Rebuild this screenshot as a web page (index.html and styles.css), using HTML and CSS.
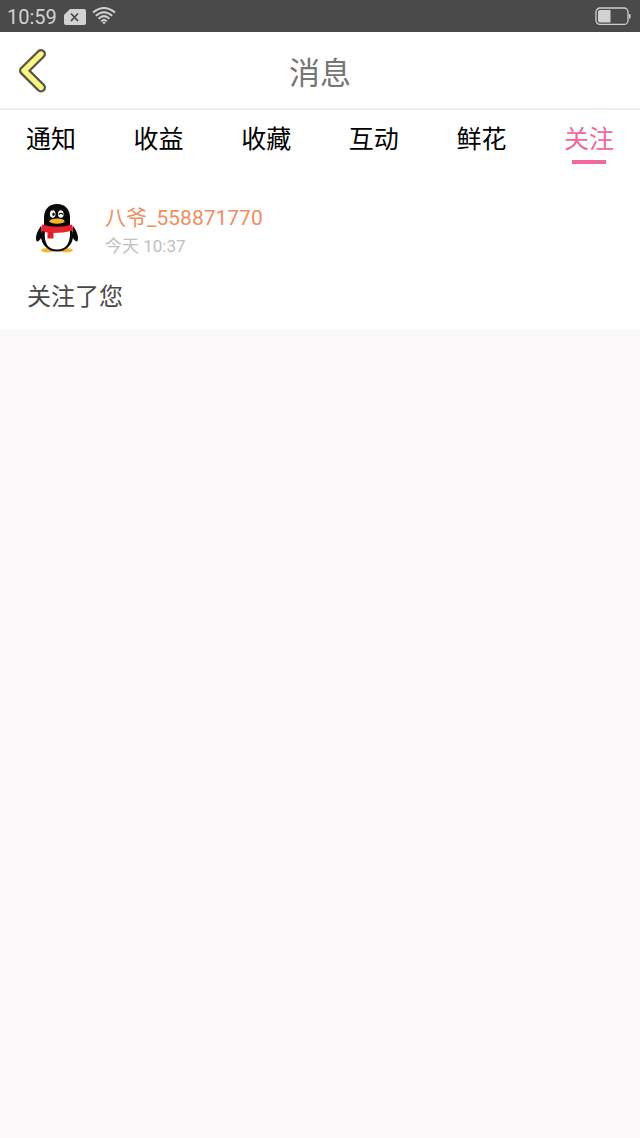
FILE: index.html
```html
<!DOCTYPE html>
<html lang="zh-CN">
<head>
  <meta charset="UTF-8">
  <meta name="viewport" content="width=device-width, initial-scale=1.0">
  <title>消息</title>
  <link rel="stylesheet" href="styles.css">
</head>
<body>
  <!-- Status bar -->
  <div class="status-bar">
    <span class="clock">10:59</span>
    <svg class="sim-icon" width="22" height="16" viewBox="0 0 22 16">
      <path d="M6 0H20Q22 0 22 2V14Q22 16 20 16H2Q0 16 0 14V6Z" fill="#d2d2d2"/>
      <path d="M7 4.5L14 12M14 4.5L7 12" stroke="#4a4a4a" stroke-width="1.8"/>
    </svg>
    <svg class="wifi-icon" width="24" height="18" viewBox="0 0 24 18">
      <g fill="none" stroke="#d2d2d2" stroke-width="2">
        <path d="M1 5.6Q12 -3.600 23 5.600"/>
        <path d="M3.800 8.800Q12 1.600 20.200 8.800"/>
        <path d="M6.600 11.700Q12 6.600 17.400 11.700"/>
        <path d="M9.200 14.300Q12 11.800 14.800 14.300"/>
      </g>
      <path d="M10.200 15.300Q12 14.300 13.800 15.300L12 17.400Z" fill="#d2d2d2"/>
    </svg>
    <svg class="battery-icon" width="36" height="19" viewBox="0 0 36 19">
      <rect x="1" y="1" width="32" height="16.4" rx="4" fill="none" stroke="#cfcfcf" stroke-width="1.3"/>
      <path d="M5 3H15.500V15.500H5Q3 15.500 3 13.500V5Q3 3 5 3Z" fill="#d2d2d2"/>
      <path d="M34 7H35.5V11.5H34Z" fill="#cfcfcf"/>
    </svg>
  </div>

  <!-- Title bar -->
  <div class="header">
    <a href="#" class="back">
      <svg width="32" height="46" viewBox="0 0 32 46">
        <g fill="none" stroke-linecap="round" stroke-linejoin="round">
          <path d="M24 6L7 22.7L24 39.5" stroke="#55534a" stroke-width="10"/>
          <path d="M24 6L7 22.7L24 39.5" stroke="#fcf683" stroke-width="5.4"/>
        </g>
      </svg>
    </a>
    <h1>消息</h1>
  </div>

  <div class="tabs">
    <a class="tab">通知</a>
    <a class="tab">收益</a>
    <a class="tab">收藏</a>
    <a class="tab">互动</a>
    <a class="tab">鲜花</a>
    <a class="tab active">关注</a>
  </div>

  <!-- Message list -->
  <div class="message">
    <div class="user">
      <svg class="avatar" width="44" height="52" viewBox="0 0 44 52">
        <ellipse cx="13" cy="47.300" rx="7" ry="2.200" fill="#f2b72d"/>
        <ellipse cx="31" cy="47.300" rx="7" ry="2.200" fill="#f2b72d"/>
        <path d="M6 23C2 28 0 34 1.500 38Q2.500 40 7 34Z" fill="#080808"/>
        <path d="M38 23C42 28 44 34 42.500 38Q41.500 40 37 34Z" fill="#080808"/>
        <ellipse cx="22" cy="33" rx="16" ry="15.500" fill="#080808"/>
        <path d="M9 25V15C9 6 14 1 22 1S35 6 35 15V25Z" fill="#080808"/>
        <path d="M10 27H35Q36 46.500 22 46.500T10 27Z" fill="#fff"/>
        <path d="M7 21.500Q22 26 37 21.500L38.500 27.500Q28 30 18 30Q11 29.500 5.500 27.500Z" fill="#e9232d"/>
        <path d="M12.500 28L18.500 29V35.500H12.500Z" fill="#e01f2a"/>
        <ellipse cx="17.700" cy="11" rx="2.800" ry="3.800" fill="#fff"/>
        <ellipse cx="25.800" cy="11" rx="2.800" ry="3.800" fill="#fff"/>
        <ellipse cx="18.500" cy="11.200" rx="1.200" ry="1.800" fill="#111"/>
        <path d="M23.800 11.500Q26 9.300 28 11.500" fill="none" stroke="#111" stroke-width="1.200"/>
        <ellipse cx="22" cy="18.200" rx="7.500" ry="2.600" fill="#f8b52c"/>
      </svg>
      <div class="user-info">
        <div class="name">八爷_558871770</div>
        <div class="time">今天 10:37</div>
      </div>
    </div>
    <p class="content">关注了您</p>
  </div>
</body>
</html>
```

FILE: styles.css
```css
* {
  margin: 0;
  padding: 0;
  box-sizing: border-box;
}

body {
  background-color: #faf8f9;
  font-family: Roboto, "Noto Sans CJK SC", sans-serif;
  min-height: 100vh;
}

.status-bar {
  display: flex;
  align-items: center;
  height: 32px;
  padding: 0 9px 0 7px;
  background-color: #4a4a4a;
}

.clock {
  color: #d2d2d2;
  font-size: 20px;
  line-height: 32px;
  padding-top: 2px;
}

.sim-icon {
  margin-top: 1px;
  margin-left: 7px;
}

.wifi-icon {
  margin-left: 6px;
}

.battery-icon {
  margin-left: auto;
}

.header {
  display: grid;
  grid-template-columns: 80px 1fr 80px;
  align-items: center;
  height: 78px;
  background-color: #fff;
  border-bottom: 2px solid #ededed;
}

.back {
  display: block;
  height: 46px;
  padding-left: 17px;
  margin-top: 2px;
}

.header h1 {
  color: #757575;
  font-size: 31px;
  font-weight: 400;
  line-height: 46px;
  text-align: center;
  padding-top: 7px;
}

.tabs {
  display: flex;
  justify-content: space-between;
  height: 66px;
  padding: 10px 26px 0;
  background-color: #fff;
}

.tab {
  display: flex;
  flex-direction: column;
  align-items: center;
  color: #000;
  font-size: 25px;
  line-height: 40px;
}

.tab.active {
  color: #f0689c;
}

.tab.active::after {
  content: "";
  width: 34px;
  height: 4px;
  background-color: #f0689c;
}

.message {
  height: 153px;
  padding: 27px 27px 0;
  background-color: #fff;
}

.user {
  display: flex;
  height: 52px;
}

.avatar {
  margin-left: 8px;
}

.user-info {
  margin-left: 26px;
}

.name {
  color: #f18d61;
  font-size: 21px;
  line-height: 31px;
}

.time {
  color: #c0c0c0;
  font-size: 17px;
  line-height: 24px;
}

.content {
  color: #484848;
  font-size: 24px;
  line-height: 36px;
  margin-top: 24px;
}
```
